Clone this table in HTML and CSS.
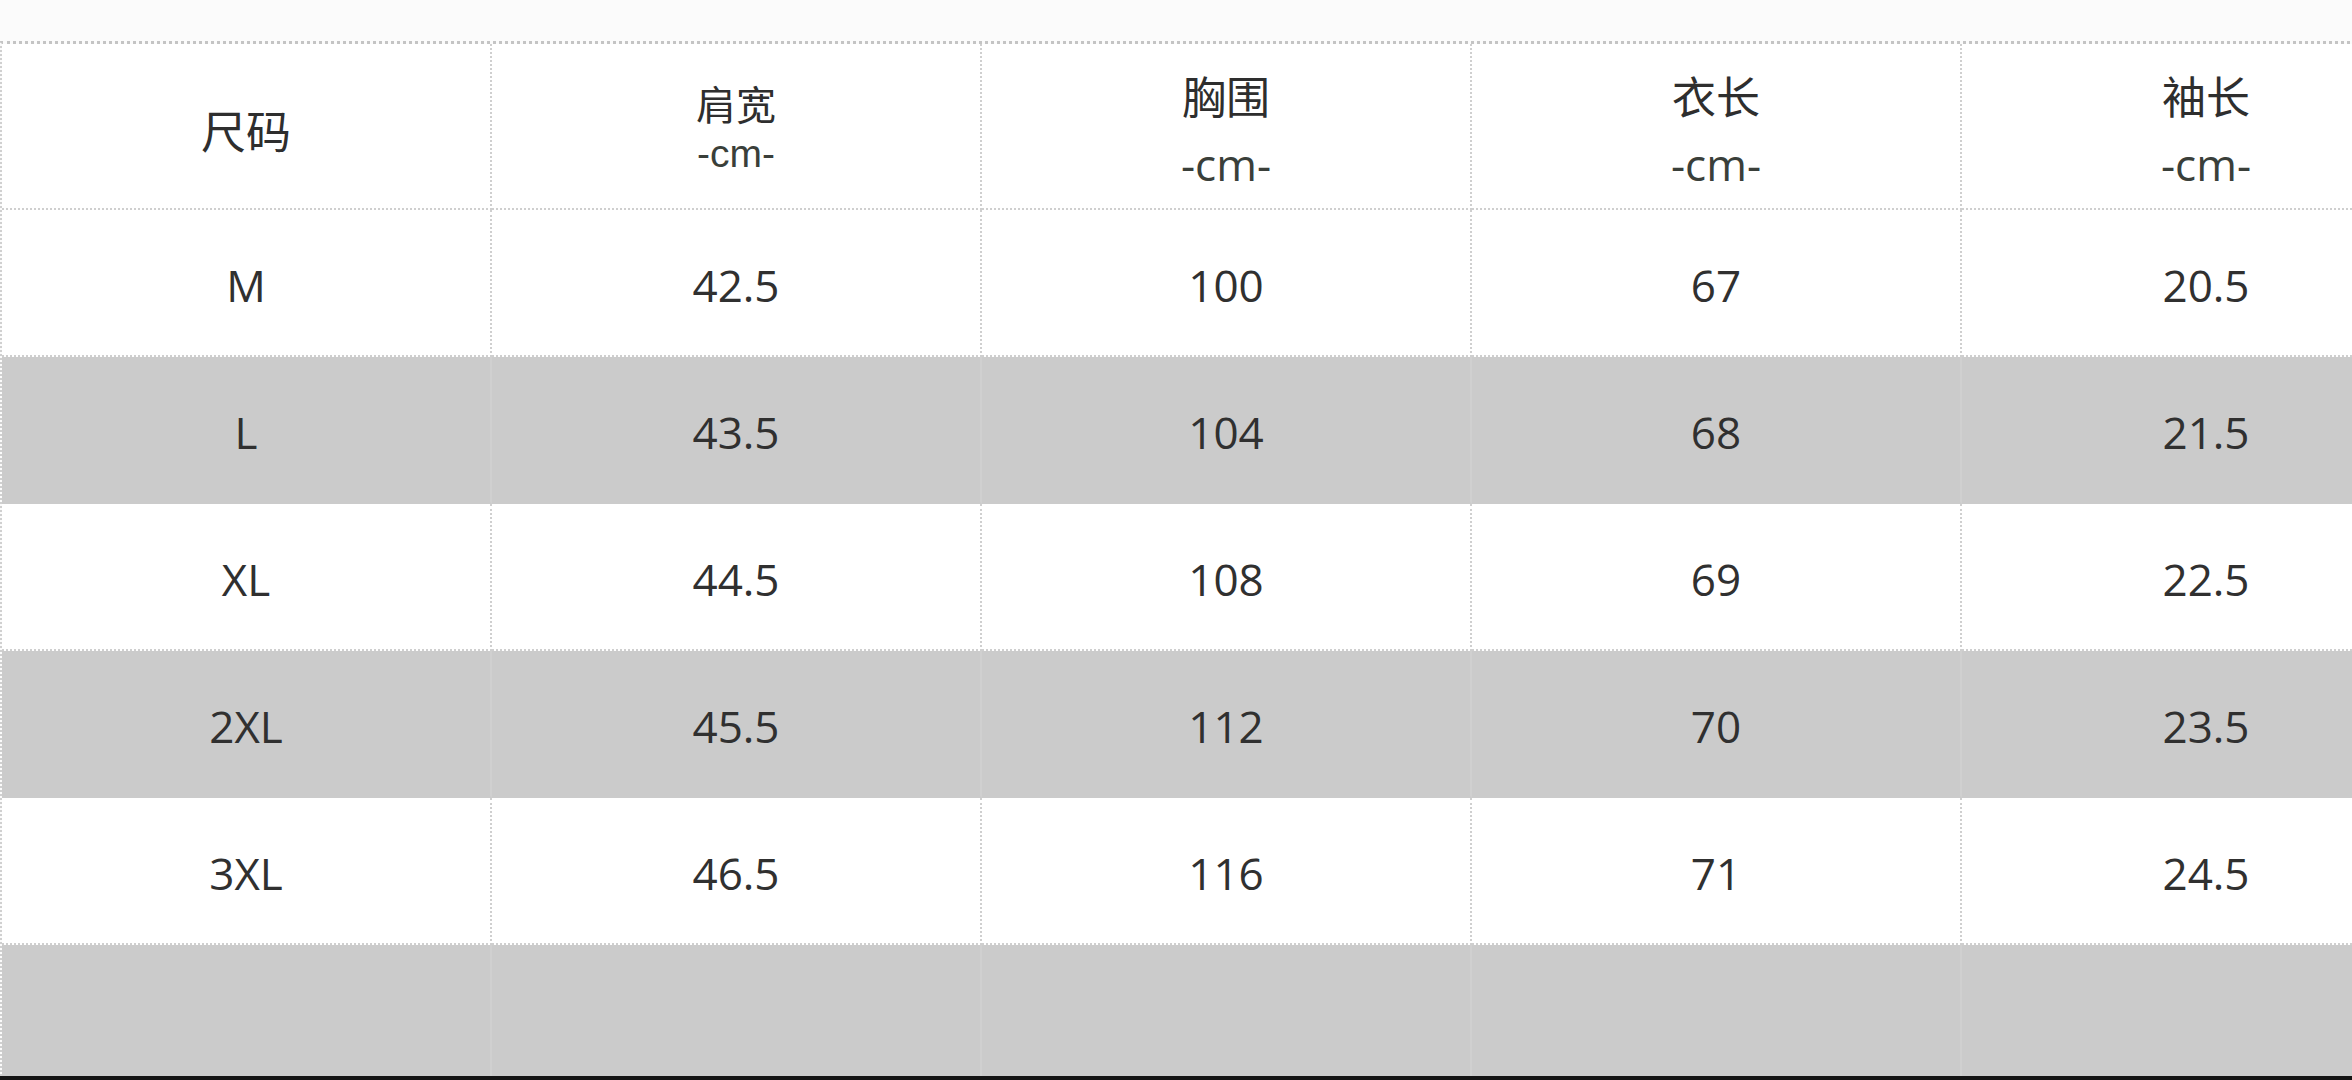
FILE: index.html
```html
<!DOCTYPE html>
<html lang="zh-CN">
<head>
<meta charset="utf-8">
<title>尺码表</title>
<link rel="stylesheet" href="styles.css">
</head>
<body>
<div class="page">
  <div class="top-gap"></div>
  <div class="sheet">
    <div class="row head">
      <div class="cell"><span class="h-single">尺码</span></div>
      <div class="cell"><div class="h-stack small"><span class="h-name">肩宽</span><span class="h-unit">-cm-</span></div></div>
      <div class="cell"><div class="h-stack"><span class="h-name">胸围</span><span class="h-unit">-cm-</span></div></div>
      <div class="cell"><div class="h-stack"><span class="h-name">衣长</span><span class="h-unit">-cm-</span></div></div>
      <div class="cell"><div class="h-stack"><span class="h-name">袖长</span><span class="h-unit">-cm-</span></div></div>
    </div>
    <div class="row data">
      <div class="cell">M</div><div class="cell">42.5</div><div class="cell">100</div><div class="cell">67</div><div class="cell">20.5</div>
    </div>
    <div class="row data shade">
      <div class="cell">L</div><div class="cell">43.5</div><div class="cell">104</div><div class="cell">68</div><div class="cell">21.5</div>
    </div>
    <div class="row data">
      <div class="cell">XL</div><div class="cell">44.5</div><div class="cell">108</div><div class="cell">69</div><div class="cell">22.5</div>
    </div>
    <div class="row data shade">
      <div class="cell">2XL</div><div class="cell">45.5</div><div class="cell">112</div><div class="cell">70</div><div class="cell">23.5</div>
    </div>
    <div class="row data">
      <div class="cell">3XL</div><div class="cell">46.5</div><div class="cell">116</div><div class="cell">71</div><div class="cell">24.5</div>
    </div>
    <div class="row blank shade">
      <div class="cell"></div><div class="cell"></div><div class="cell"></div><div class="cell"></div><div class="cell"></div>
    </div>
  </div>
  <div class="base-line"></div>
</div>
</body>
</html>
```
FILE: styles.css
```css
html, body {
  margin: 0;
  padding: 0;
  background: #fbfbfb;
  overflow: hidden;
}

.page {
  width: 2352px;
  height: 1080px;
  display: flex;
  flex-direction: column;
  overflow: hidden;
  font-family: "Open Sans", "Noto Sans CJK SC", sans-serif;
  color: #333;
}

.top-gap {
  height: 41px;
  flex: none;
}

.sheet {
  display: flex;
  flex-direction: column;
  width: 2450px;
  border-top: 3px dotted #c4c4c4;
  border-left: 2px dotted #d0d0d0;
  flex: none;
}

.row {
  display: flex;
  flex: none;
}

.cell {
  width: 490px;
  flex: none;
  box-sizing: border-box;
  display: flex;
  align-items: center;
  justify-content: center;
  border-right: 2px dotted #cfcfcf;
  border-bottom: 2px dotted #cfcfcf;
  background: #ffffff;
}

.head .cell {
  height: 166px;
  padding-top: 12px;
}

.data .cell {
  height: 147px;
  font-size: 44px;
  padding-top: 4px;
  color: #303030;
}

.blank .cell {
  height: 131px;
  border-bottom: none;
}

.shade .cell {
  background: #cbcbcb;
  border-bottom-color: #cbcbcb;
  border-right: 2px solid #d0d0d0;
}

.h-single {
  font-family: "Noto Sans CJK SC", sans-serif;
  font-size: 45px;
  font-weight: 400;
  color: #2e2e2e;
  margin-bottom: 6px;
}

.h-stack {
  display: flex;
  flex-direction: column;
  align-items: center;
}

.h-name {
  font-family: "Noto Sans CJK SC", sans-serif;
  font-size: 44px;
  line-height: 56px;
  color: #2e2e2e;
}

.h-unit {
  font-family: "Open Sans", sans-serif;
  font-size: 44px;
  line-height: 66px;
  margin-top: 8px;
  color: #3a3f3a;
}

.h-stack.small .h-name {
  font-size: 40px;
  line-height: 44px;
}

.h-stack.small .h-unit {
  font-family: "Liberation Sans", "Open Sans", sans-serif;
  font-size: 39px;
  line-height: 58px;
  margin-top: 0;
}

.base-line {
  height: 4px;
  width: 100%;
  background: #141414;
  flex: none;
}
```
